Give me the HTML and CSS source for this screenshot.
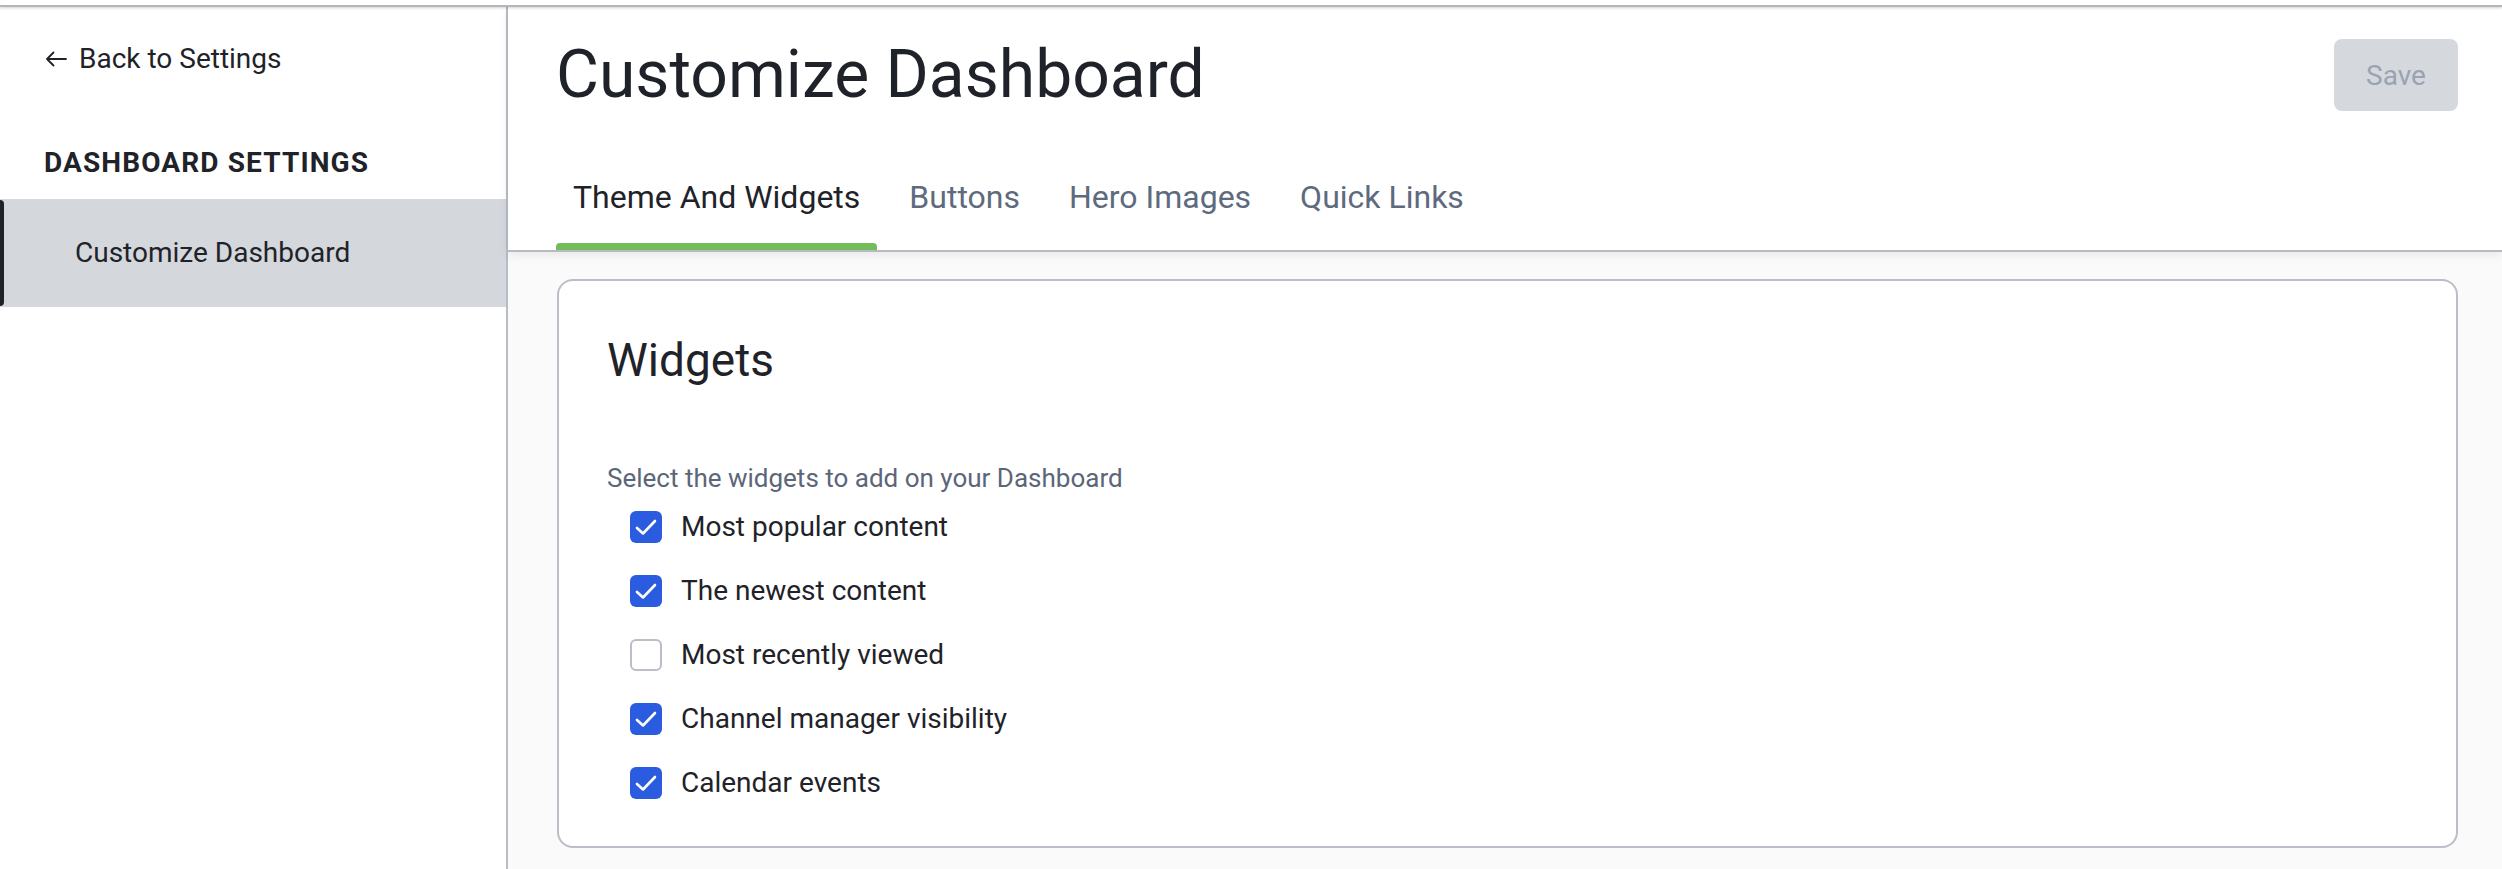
FILE: index.html
```html
<!DOCTYPE html>
<html lang="en">
<head>
<meta charset="utf-8">
<title>Customize Dashboard</title>
<link rel="stylesheet" href="styles.css">
</head>
<body>
<div class="topbar"></div>
<div class="layout">
  <aside class="sidebar">
    <a class="back" href="#">
      <svg class="back-icon" width="22" height="16" viewBox="0 0 22 16" aria-hidden="true">
        <path d="M21 8H2M8.5 1.5L2 8l6.5 6.5" fill="none" stroke="#1f2329" stroke-width="1.8" stroke-linecap="round" stroke-linejoin="round"/>
      </svg>
      <span>Back to Settings</span>
    </a>
    <div class="side-title">DASHBOARD SETTINGS</div>
    <div class="side-item active">Customize Dashboard</div>
  </aside>
  <main class="main">
    <header class="header">
      <div class="header-row">
        <h1 class="title">Customize Dashboard</h1>
        <button class="save" disabled>Save</button>
      </div>
      <nav class="tabs">
        <div class="tab active">Theme And Widgets</div>
        <div class="tab">Buttons</div>
        <div class="tab">Hero Images</div>
        <div class="tab">Quick Links</div>
      </nav>
    </header>
    <section class="card">
      <h2 class="card-title">Widgets</h2>
      <p class="card-sub">Select the widgets to add on your Dashboard</p>
      <ul class="checks">
        <li class="check-row"><span class="box on"><svg width="32" height="32" viewBox="0 0 32 32"><path d="M7 17l6 5.5L25 10" fill="none" stroke="#fff" stroke-width="2.6" stroke-linecap="round" stroke-linejoin="round"/></svg></span><span class="label">Most popular content</span></li>
        <li class="check-row"><span class="box on"><svg width="32" height="32" viewBox="0 0 32 32"><path d="M7 17l6 5.5L25 10" fill="none" stroke="#fff" stroke-width="2.6" stroke-linecap="round" stroke-linejoin="round"/></svg></span><span class="label">The newest content</span></li>
        <li class="check-row"><span class="box"></span><span class="label">Most recently viewed</span></li>
        <li class="check-row"><span class="box on"><svg width="32" height="32" viewBox="0 0 32 32"><path d="M7 17l6 5.5L25 10" fill="none" stroke="#fff" stroke-width="2.6" stroke-linecap="round" stroke-linejoin="round"/></svg></span><span class="label">Channel manager visibility</span></li>
        <li class="check-row"><span class="box on"><svg width="32" height="32" viewBox="0 0 32 32"><path d="M7 17l6 5.5L25 10" fill="none" stroke="#fff" stroke-width="2.6" stroke-linecap="round" stroke-linejoin="round"/></svg></span><span class="label">Calendar events</span></li>
      </ul>
    </section>
  </main>
</div>
</body>
</html>
```
FILE: styles.css
```css
* { box-sizing: border-box; }
html, body {
  margin: 0;
  padding: 0;
  width: 2502px;
  height: 869px;
  overflow: hidden;
  background: #fafafa;
  font-family: Roboto, "Liberation Sans", Arial, sans-serif;
  color: #1f2329;
}
.topbar {
  position: relative;
  z-index: 3;
  height: 7px;
  background: #fff;
  border-bottom: 2px solid #b3b6bb;
  box-shadow: 0 1px 3px rgba(0, 0, 0, 0.18);
}
.layout {
  display: flex;
  height: 862px;
}
.sidebar {
  width: 508px;
  flex: none;
  background: #fff;
  border-right: 2px solid #b8bcc5;
  padding-top: 34px;
}
.back {
  display: flex;
  align-items: center;
  gap: 12px;
  padding-left: 45px;
  height: 36px;
  font-size: 28px;
  line-height: 36px;
  color: #1f2329;
  text-decoration: none;
}
.back-icon { flex: none; }
.side-title {
  margin-top: 68px;
  padding-left: 44px;
  font-size: 28px;
  line-height: 36px;
  font-weight: 700;
  letter-spacing: 0.04em;
  color: #1f2329;
}
.side-item {
  position: relative;
  margin-top: 18px;
  height: 108px;
  padding: 36px 0 0 75px;
  font-size: 28px;
  line-height: 36px;
  color: #1f2329;
}
.side-item.active { background: #d4d7dc; }
.side-item.active::before {
  content: "";
  position: absolute;
  left: 0;
  top: 1px;
  bottom: 1px;
  width: 4px;
  background: #1f2329;
  border-radius: 0 4px 4px 0;
}
.main {
  flex: 1;
  display: flex;
  flex-direction: column;
  min-width: 0;
}
.header {
  position: relative;
  z-index: 2;
  background: #fff;
  border-bottom: 2px solid #b6bac3;
  box-shadow: 0 3px 10px rgba(0, 0, 0, 0.08);
  padding: 28px 44px 0 48px;
}
.header-row {
  display: flex;
  justify-content: space-between;
  align-items: flex-start;
}
.title {
  margin: 0;
  font-size: 66px;
  line-height: 80px;
  font-weight: 400;
  color: #1f2329;
}
.save {
  margin-top: 4px;
  width: 124px;
  height: 72px;
  border: none;
  border-radius: 8px;
  background: #d5d8dd;
  color: #9aa3b1;
  font-family: inherit;
  font-size: 28px;
  padding: 0;
}
.tabs {
  display: flex;
  gap: 15px;
  margin-top: 62px;
}
.tab {
  position: relative;
  padding: 0 17px 33px;
  font-size: 32px;
  line-height: 40px;
  color: #5e6a7d;
}
.tab.active { color: #1f2329; }
.tab.active::after {
  content: "";
  position: absolute;
  left: 0;
  right: 0;
  bottom: 0;
  height: 7px;
  background: #72bd57;
  border-radius: 4px 4px 0 0;
}
.card {
  margin: 27px 44px 0 49px;
  background: #fff;
  border: 2px solid #b9bec7;
  border-radius: 16px;
  padding: 51px 48px 47px;
}
.card-title {
  margin: 0;
  font-size: 46px;
  line-height: 56px;
  font-weight: 400;
  color: #1f2329;
}
.card-sub {
  margin: 73px 0 0;
  font-size: 26px;
  line-height: 34px;
  color: #5b6678;
}
.checks {
  list-style: none;
  margin: 16px 0 0;
  padding: 0 0 0 23px;
  display: flex;
  flex-direction: column;
  gap: 32px;
}
.check-row {
  display: flex;
  align-items: center;
  gap: 19px;
  height: 32px;
}
.box {
  flex: none;
  width: 32px;
  height: 32px;
  border-radius: 6px;
  border: 2px solid #b9bec8;
  background: #fff;
  display: block;
}
.box.on {
  border: none;
  background: #2b5bde;
}
.box svg { display: block; }
.label {
  font-size: 28px;
  line-height: 36px;
  color: #1f2329;
}
```
